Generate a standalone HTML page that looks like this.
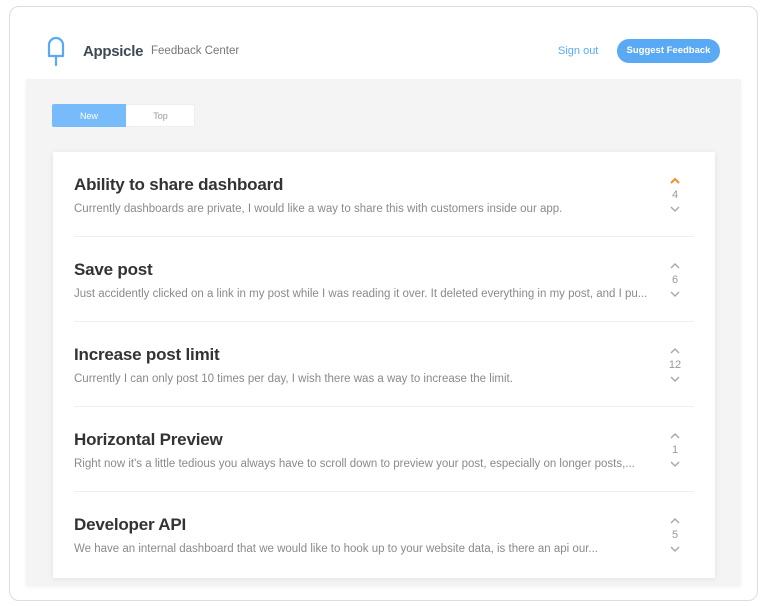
<!DOCTYPE html>
<html><head><style>
*{margin:0;padding:0;box-sizing:border-box}
body{width:768px;height:606px;background:#fff;font-family:"Liberation Sans",sans-serif;position:relative;overflow:hidden}
.frame{position:absolute;left:9px;top:6px;width:749px;height:595px;border:1px solid #ddd;border-radius:10px;background:#fff}
.gray{position:absolute;left:26px;top:79px;width:715px;height:506px;background:#f4f4f4;box-shadow:0 2px 4px rgba(0,0,0,.06)}
.abs{position:absolute}
.card{position:absolute;left:53px;top:152px;width:662px;height:426px;background:#fff;box-shadow:0 1px 6px rgba(0,0,0,.08)}
.item{position:absolute;left:21px;width:600px}
.t{font-size:17px;font-weight:bold;color:#333;letter-spacing:-0.2px;white-space:nowrap}
.d{font-size:11.5px;color:#8a8a8a;margin-top:8px;white-space:nowrap}
.sep{position:absolute;left:21px;width:620px;height:1px;background:#efefef}
.v{position:absolute;left:609px;width:26px;text-align:center;font-size:11px;color:#999;line-height:20px}
.v svg{display:block;margin:0 auto}
</style></head><body>
<div class="frame"></div>
<svg class="abs" style="left:46px;top:36px" width="20" height="32" viewBox="0 0 20 32"><path d="M3 20 V9 a7 7 0 0 1 14 0 V20 Z M10 20 V29" fill="none" stroke="#5aa9f5" stroke-width="2.2" stroke-linejoin="round" stroke-linecap="round"/></svg>
<div class="abs" style="left:83px;top:43px;font-size:15px;font-weight:bold;color:#3d4a55;letter-spacing:-0.3px">Appsicle</div>
<div class="abs" style="left:151px;top:45px;font-size:11.5px;color:#777">Feedback Center</div>
<div class="abs" style="left:558px;top:45px;font-size:11px;color:#5aa9f5">Sign out</div>
<div class="abs" style="left:617px;top:39px;width:103px;height:24px;border-radius:12px;background:#5aa9f5;color:#fff;font-size:9.5px;font-weight:bold;text-align:center;line-height:24px">Suggest Feedback</div>
<div class="gray"></div>
<div class="abs" style="left:52px;top:104px;width:143px;height:23px;background:#fff;border:1px solid #eee;border-radius:2px"></div>
<div class="abs" style="left:52px;top:104px;width:74px;height:23px;background:#78bbfa;border-radius:2px 0 0 2px;color:#fff;font-size:9px;text-align:center;line-height:24px">New</div>
<div class="abs" style="left:126px;top:104px;width:69px;height:23px;color:#999;font-size:9px;text-align:center;line-height:24px">Top</div>
<div class="card">
 <div class="item" style="top:23px"><div class="t">Ability to share dashboard</div><div class="d">Currently dashboards are private, I would like a way to share this with customers inside our app.</div></div>
 <div class="v" style="top:25px"><svg width="12" height="8"><path d="M2 6 L6 2 L10 6" fill="none" stroke="#f0922b" stroke-width="2"/></svg><div>4</div><svg width="12" height="8"><path d="M2 2 L6 6 L10 2" fill="none" stroke="#aaa" stroke-width="1.5"/></svg></div>
 <div class="sep" style="top:84px"></div>
 <div class="item" style="top:108px"><div class="t">Save post</div><div class="d">Just accidently clicked on a link in my post while I was reading it over. It deleted everything in my post, and I pu...</div></div>
 <div class="v" style="top:110px"><svg width="12" height="8"><path d="M2 6 L6 2 L10 6" fill="none" stroke="#aaa" stroke-width="1.5"/></svg><div>6</div><svg width="12" height="8"><path d="M2 2 L6 6 L10 2" fill="none" stroke="#aaa" stroke-width="1.5"/></svg></div>
 <div class="sep" style="top:169px"></div>
 <div class="item" style="top:193px"><div class="t">Increase post limit</div><div class="d">Currently I can only post 10 times per day, I wish there was a way to increase the limit.</div></div>
 <div class="v" style="top:195px"><svg width="12" height="8"><path d="M2 6 L6 2 L10 6" fill="none" stroke="#aaa" stroke-width="1.5"/></svg><div>12</div><svg width="12" height="8"><path d="M2 2 L6 6 L10 2" fill="none" stroke="#aaa" stroke-width="1.5"/></svg></div>
 <div class="sep" style="top:254px"></div>
 <div class="item" style="top:278px"><div class="t">Horizontal Preview</div><div class="d">Right now it's a little tedious you always have to scroll down to preview your post, especially on longer posts,...</div></div>
 <div class="v" style="top:280px"><svg width="12" height="8"><path d="M2 6 L6 2 L10 6" fill="none" stroke="#aaa" stroke-width="1.5"/></svg><div>1</div><svg width="12" height="8"><path d="M2 2 L6 6 L10 2" fill="none" stroke="#aaa" stroke-width="1.5"/></svg></div>
 <div class="sep" style="top:339px"></div>
 <div class="item" style="top:363px"><div class="t">Developer API</div><div class="d">We have an internal dashboard that we would like to hook up to your website data, is there an api our...</div></div>
 <div class="v" style="top:365px"><svg width="12" height="8"><path d="M2 6 L6 2 L10 6" fill="none" stroke="#aaa" stroke-width="1.5"/></svg><div>5</div><svg width="12" height="8"><path d="M2 2 L6 6 L10 2" fill="none" stroke="#aaa" stroke-width="1.5"/></svg></div>
</div>
</body></html>
